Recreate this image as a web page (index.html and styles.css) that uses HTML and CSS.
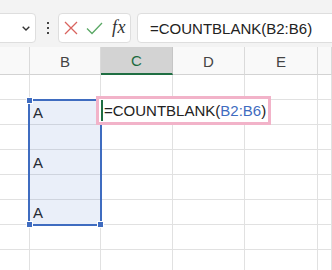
FILE: index.html
```html
<!DOCTYPE html>
<html>
<head>
<meta charset="utf-8">
<link rel="stylesheet" href="styles.css">
</head>
<body>
<div class="app">
  <div class="toolbar">
    <div class="namebox">
      <svg class="chev" width="8" height="5" viewBox="0 0 8 5"><path d="M0.7 0.7 L4 4 L7.3 0.7" fill="none" stroke="#333" stroke-width="1.4"/></svg>
    </div>
    <div class="dots"><span></span><span></span><span></span></div>
    <div class="fxbox">
      <svg class="ico-x" width="14" height="14" viewBox="0 0 14 14"><path d="M1 1 L13 13 M13 1 L1 13" stroke="#d9645f" stroke-width="1.3" fill="none"/></svg>
      <svg class="ico-ok" width="17" height="13" viewBox="0 0 17 13"><path d="M1 6.5 L6 11.5 L16 1" stroke="#5aa865" stroke-width="1.3" fill="none"/></svg>
      <span class="fx">fx</span>
    </div>
    <div class="formula">=COUNTBLANK(B2:B6)</div>
  </div>
  <div class="sheet">
    <div class="hd"></div>
    <div class="hd">B</div>
    <div class="hd active">C</div>
    <div class="hd">D</div>
    <div class="hd">E</div>
    <div class="hd"></div>

    <div class="c"></div><div class="c"></div><div class="c"></div><div class="c"></div><div class="c"></div><div class="c"></div>
    <div class="c"></div><div class="c">A</div><div class="c"></div><div class="c"></div><div class="c"></div><div class="c"></div>
    <div class="c"></div><div class="c"></div><div class="c"></div><div class="c"></div><div class="c"></div><div class="c"></div>
    <div class="c"></div><div class="c">A</div><div class="c"></div><div class="c"></div><div class="c"></div><div class="c"></div>
    <div class="c"></div><div class="c"></div><div class="c"></div><div class="c"></div><div class="c"></div><div class="c"></div>
    <div class="c"></div><div class="c">A</div><div class="c"></div><div class="c"></div><div class="c"></div><div class="c"></div>
    <div class="c"></div><div class="c"></div><div class="c"></div><div class="c"></div><div class="c"></div><div class="c"></div>
    <div class="c"></div><div class="c"></div><div class="c"></div><div class="c"></div><div class="c"></div><div class="c"></div>

    <div class="range">
      <span class="h tl"></span><span class="h bl"></span><span class="h br"></span>
    </div>
    <div class="edit"><span class="caret"></span>=COUNTBLANK(<span class="ref">B2:B6</span>)</div>
  </div>
</div>
</body>
</html>
```

FILE: styles.css
```css
html, body {
  margin: 0;
  padding: 0;
  background: #fff;
}
body {
  width: 332px;
  height: 270px;
  overflow: hidden;
  font-family: "Liberation Sans", Arial, sans-serif;
  color: #222;
}
.app {
  width: 332px;
  height: 270px;
  overflow: hidden;
}
.toolbar {
  display: flex;
  align-items: center;
  height: 47px;
  box-sizing: border-box;
  padding: 13px 0 4px;
  background: #f3f3f3;
  white-space: nowrap;
  overflow: hidden;
}
.namebox,
.fxbox,
.formula {
  height: 30px;
  box-sizing: border-box;
  background: #fff;
  border: 1px solid #dedede;
  border-radius: 4px;
  display: flex;
  align-items: center;
  flex: none;
}
.namebox {
  width: 46px;
  margin-left: -10px;
  justify-content: flex-end;
  padding-right: 5px;
}
.chev { display: block; }
.dots {
  display: flex;
  flex-direction: column;
  gap: 3px;
  margin-left: 11px;
  flex: none;
}
.dots span {
  display: block;
  width: 2px;
  height: 2px;
  background: #444;
}
.fxbox {
  width: 73px;
  margin-left: 9px;
  padding-left: 5px;
}
.ico-x { display: block; }
.ico-ok { display: block; margin-left: 8px; }
.fx {
  font-family: "Liberation Serif", "Times New Roman", serif;
  font-style: italic;
  font-size: 18px;
  color: #333;
  margin-left: 9px;
  letter-spacing: 0.5px;
  line-height: 1;
  margin-top: -2px;
}
.formula {
  flex: 1 0 auto;
  margin-left: 6px;
  margin-right: -10px;
  padding-left: 12px;
  font-size: 15px;
  color: #222;
}
.sheet {
  position: relative;
  display: grid;
  grid-template-columns: 30px 71px 72px 72px 73px 1fr;
  grid-template-rows: 28px repeat(8, 25px);
}
.hd {
  box-sizing: border-box;
  background: #f9f9f9;
  border-right: 1px solid #dadada;
  border-bottom: 1px solid #d3d3d3;
  font-size: 15px;
  color: #444;
  display: flex;
  align-items: center;
  justify-content: center;
  padding-top: 1px;
}
.hd.active {
  background: #d3d3d3;
  color: #1c6b3e;
  border-bottom: 2px solid #1f6e42;
  border-right-color: #c6c6c6;
}
.c {
  box-sizing: border-box;
  border-right: 1px solid #e1e1e1;
  border-bottom: 1px solid #e1e1e1;
  font-size: 15px;
  color: #222;
  display: flex;
  align-items: center;
  padding-left: 3px;
}
.range {
  position: absolute;
  grid-column: 2 / 3;
  grid-row: 3 / 8;
  left: -2px;
  top: -1px;
  right: -1px;
  bottom: -1px;
  border: 2px solid #3f6cc0;
  background: rgba(60, 105, 200, 0.11);
  z-index: 1;
}
.h {
  position: absolute;
  width: 5px;
  height: 5px;
  background: #3f6cc0;
  border: 1px solid #fff;
}
.h.tl { left: -4px; top: -4px; }
.h.bl { left: -4px; bottom: -4px; }
.h.br { right: -4px; bottom: -4px; }
.edit {
  position: absolute;
  grid-column: 3 / 4;
  grid-row: 3 / 4;
  left: -5px;
  top: -4px;
  width: 175px;
  height: 29px;
  box-sizing: border-box;
  border: 3px solid #f2b3c9;
  background: #fff;
  z-index: 2;
  display: flex;
  align-items: center;
  padding-left: 6px;
  font-size: 15px;
  color: #222;
  white-space: nowrap;
}
.caret {
  display: block;
  width: 2px;
  height: 21px;
  background: #1f6e42;
  margin-right: 1px;
  margin-left: -4px;
}
.ref { color: #3f6cc0; }
```
